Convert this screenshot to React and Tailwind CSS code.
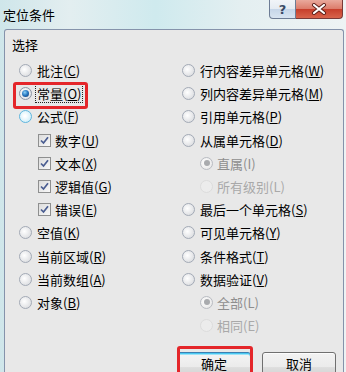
import React from "react";

const FONT = { fontFamily: '"Noto Sans CJK SC", "Noto Sans", sans-serif' };

function Radio({ state = "off" }) {
  if (state === "on") {
    return (
      <span className="flex items-center justify-center w-[13px] h-[13px] rounded-full border border-[#8c96a6] bg-[radial-gradient(circle_at_40%_40%,#ffffff,#d6d9de)] shrink-0">
        <span className="w-[7px] h-[7px] rounded-full bg-[radial-gradient(circle_at_40%_35%,#8fd2f6_0%,#2a7cc4_45%,#0d2f66_100%)]" />
      </span>
    );
  }
  if (state === "hover") {
    return (
      <span className="w-[13px] h-[13px] rounded-full border border-[#5fb6de] bg-[radial-gradient(circle_at_45%_45%,#ffffff_10%,#bfe8f7_100%)] shrink-0" />
    );
  }
  if (state === "disOn") {
    return (
      <span className="flex items-center justify-center w-[13px] h-[13px] rounded-full border border-[#b9bcc2] bg-[radial-gradient(circle_at_40%_40%,#ffffff,#e2e2e2)] shrink-0">
        <span className="w-[6px] h-[6px] rounded-full bg-[#a9abae]" />
      </span>
    );
  }
  if (state === "disOff") {
    return <span className="w-[13px] h-[13px] rounded-full border border-[#dcdcdc] bg-[#ececec] shrink-0" />;
  }
  return (
    <span className="w-[13px] h-[13px] rounded-full border border-[#a3aab6] bg-[radial-gradient(circle_at_40%_40%,#ffffff,#d3d5d9)] shrink-0" />
  );
}

function Check() {
  return (
    <span className="flex items-center justify-center w-[13px] h-[13px] border border-[#8e8f8f] bg-[linear-gradient(135deg,#dcdcdc,#f8f8f8)] shrink-0">
      <svg width="9" height="9" viewBox="0 0 9 9">
        <path d="M1 4.5 L3.5 7 L8 1.2" fill="none" stroke="#4a5d91" strokeWidth="1.7" />
      </svg>
    </span>
  );
}

function Label({ text, k }) {
  const i = text.indexOf("(" + k + ")");
  const before = text.slice(0, i);
  return (
    <span className="text-black">
      {before}(<u className="underline-offset-[1px]">{k}</u>)
    </span>
  );
}

function Row({ children, indent = 0 }) {
  return (
    <div className="h-[23.2px] shrink-0 flex items-center" style={{ paddingLeft: indent }}>
      {children}
    </div>
  );
}

export default function App() {
  return (
    <div
      className="relative w-[346px] h-[372px] overflow-hidden bg-[linear-gradient(90deg,#cfe6ea_0%,#e3eef0_20%,#cfeaee_45%,#e4eff1_70%,#eef3f4_100%)] text-[13px] leading-none"
      style={FONT}
    >
      {/* title bar */}
      <div className="h-[29px] flex items-start">
        <div className="pl-[3px] pt-[8px] text-[13px] text-black">定位条件</div>
        <div className="ml-auto mr-[3px] flex">
          <div className="w-[27px] h-[19px] border border-[#6d7c95] border-t-0 rounded-bl-[4px] bg-[linear-gradient(180deg,#f1f4f8_0%,#e5ebf2_50%,#c6d6e9_52%,#d8e4f1_100%)] flex items-center justify-center text-[#3b4a66] font-bold text-[13px]" style={{ fontFamily: '"DejaVu Sans", sans-serif' }}>
            ?
          </div>
          <div className="w-[47px] h-[19px] border border-[#7a3a38] border-t-0 border-l-0 rounded-br-[4px] bg-[linear-gradient(180deg,#e9a99c_0%,#dc7d6c_48%,#c73f2c_52%,#d8644c_100%)] flex items-center justify-center">
            <svg width="16" height="12" viewBox="0 0 16 12">
              <path d="M3 2 L13 10 M13 2 L3 10" stroke="#5a1e18" strokeWidth="4" strokeLinecap="round" />
              <path d="M3 2 L13 10 M13 2 L3 10" stroke="#ffffff" strokeWidth="2.2" strokeLinecap="round" />
            </svg>
          </div>
        </div>
      </div>

      {/* panel */}
      <div className="ml-[4px] w-[340px] h-[343px] border border-b-0 border-[#8593ab] rounded-t-[3px] bg-[#e8e8e8] flex flex-col">
        <div className="h-[29px] shrink-0 flex items-center pl-[7px]">选择</div>
        <div className="flex shrink-0">
          <div className="w-[177px] pl-[14px] flex flex-col">
            <Row><Radio /><span className="ml-[5px]"><Label text="批注(C)" k="C" /></span></Row>
            <Row>
              <Radio state="on" />
              <span className="ml-[3px] border border-dotted border-[#222] px-[1px] py-[2px]"><Label text="常量(O)" k="O" /></span>
            </Row>
            <Row><Radio state="hover" /><span className="ml-[5px]"><Label text="公式(F)" k="F" /></span></Row>
            <Row indent={19}><Check /><span className="ml-[4px]"><Label text="数字(U)" k="U" /></span></Row>
            <Row indent={19}><Check /><span className="ml-[4px]"><Label text="文本(X)" k="X" /></span></Row>
            <Row indent={19}><Check /><span className="ml-[4px]"><Label text="逻辑值(G)" k="G" /></span></Row>
            <Row indent={19}><Check /><span className="ml-[4px]"><Label text="错误(E)" k="E" /></span></Row>
            <Row><Radio /><span className="ml-[5px]"><Label text="空值(K)" k="K" /></span></Row>
            <Row><Radio /><span className="ml-[5px]"><Label text="当前区域(R)" k="R" /></span></Row>
            <Row><Radio /><span className="ml-[5px]"><Label text="当前数组(A)" k="A" /></span></Row>
            <Row><Radio /><span className="ml-[5px]"><Label text="对象(B)" k="B" /></span></Row>
          </div>
          <div className="flex-1 flex flex-col">
            <Row><Radio /><span className="ml-[5px]"><Label text="行内容差异单元格(W)" k="W" /></span></Row>
            <Row><Radio /><span className="ml-[5px]"><Label text="列内容差异单元格(M)" k="M" /></span></Row>
            <Row><Radio /><span className="ml-[5px]"><Label text="引用单元格(P)" k="P" /></span></Row>
            <Row><Radio /><span className="ml-[5px]"><Label text="从属单元格(D)" k="D" /></span></Row>
            <Row indent={18}><Radio state="disOn" /><span className="ml-[4px] text-[#8e8e8e]">直属(I)</span></Row>
            <Row indent={18}><Radio state="disOff" /><span className="ml-[4px] text-[#a9a9a9]">所有级别(L)</span></Row>
            <Row><Radio /><span className="ml-[5px]"><Label text="最后一个单元格(S)" k="S" /></span></Row>
            <Row><Radio /><span className="ml-[5px]"><Label text="可见单元格(Y)" k="Y" /></span></Row>
            <Row><Radio /><span className="ml-[5px]"><Label text="条件格式(T)" k="T" /></span></Row>
            <Row><Radio /><span className="ml-[5px]"><Label text="数据验证(V)" k="V" /></span></Row>
            <Row indent={18}><Radio state="disOn" /><span className="ml-[4px] text-[#8e8e8e]">全部(L)</span></Row>
            <Row indent={18}><Radio state="disOff" /><span className="ml-[4px] text-[#a9a9a9]">相同(E)</span></Row>
          </div>
        </div>
        <div className="mt-[15px] shrink-0 flex pl-[172px] gap-[11px]">
          <div className="w-[74px] h-[30px] rounded-[3px] border border-[#3c7fb1] bg-[linear-gradient(180deg,#f4f4f4_0%,#ebebeb_50%,#dddddd_52%,#cfcfcf_100%)] shadow-[inset_0_1px_0_#49c8f2,inset_0_2px_0_#9fe3f7] flex items-start justify-center pt-[4px]">
            确定
          </div>
          <div className="w-[74px] h-[30px] rounded-[3px] border border-[#707070] bg-[linear-gradient(180deg,#f2f2f2_0%,#ebebeb_50%,#dddddd_52%,#cfcfcf_100%)] shadow-[inset_0_1px_0_#fcfcfc] flex items-start justify-center pt-[4px]">
            取消
          </div>
        </div>
      </div>

      {/* red annotation boxes */}
      <div className="absolute left-[13px] top-[82px] w-[75px] h-[27px] border-[3px] border-[#e4262a] rounded-[3px]" />
      <div className="absolute left-[177px] top-[346px] w-[76px] h-[40px] border-[3px] border-[#e4262a] rounded-[3px]" />
    </div>
  );
}
